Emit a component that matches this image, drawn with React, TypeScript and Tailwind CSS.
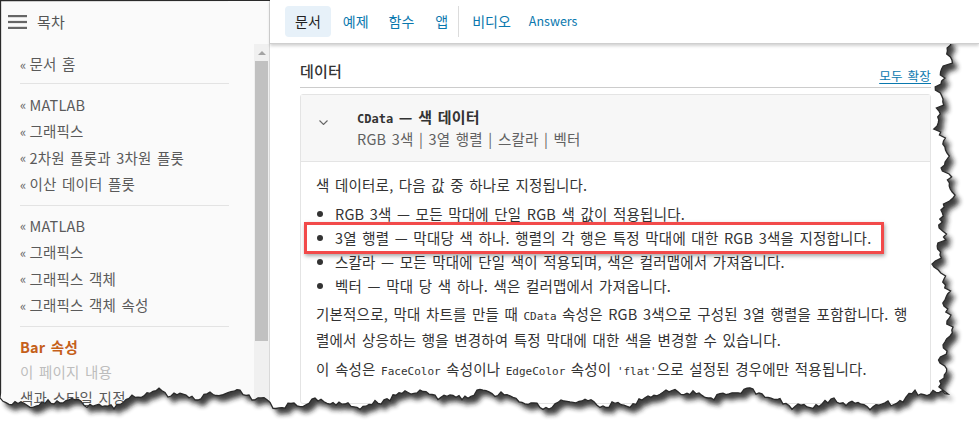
import React from "react";

function rnd(i: number) {
  const x = Math.sin(i * 12.9898 + 78.233) * 43758.5453;
  return x - Math.floor(x);
}

function tornPath() {
  const pts: string[] = [];
  pts.push("0.5,0.5");
  for (let y = 0; y <= 388; y += 3) {
    const x =
      944 +
      5 * Math.sin(y / 23) +
      3 * Math.sin(y / 7.3) +
      2.5 * Math.sin(y / 3.1 + 1) +
      (rnd(y) - 0.5) * 6;
    pts.push(`${x.toFixed(1)},${y}`);
  }
  for (let x = 948; x >= 0; x -= 3) {
    const y =
      399 +
      6 * Math.sin(x / 41) +
      4 * Math.sin(x / 13.7) +
      2 * Math.sin(x / 4.3) +
      (rnd(x + 1000) - 0.5) * 5;
    pts.push(`${x},${y.toFixed(1)}`);
  }
  pts.push("0.5,393");
  return "M" + pts.join(" L") + " Z";
}

function TornEdge() {
  const d = tornPath();
  return (
    <svg className="absolute inset-0 pointer-events-none" width={979} height={435} viewBox="0 0 979 435">
      <defs>
        <mask id="outside">
          <rect x="0" y="0" width="979" height="435" fill="white" />
          <path d={d} fill="black" />
        </mask>
        <filter id="blur" x="-10%" y="-10%" width="120%" height="120%">
          <feGaussianBlur stdDeviation="2.6" />
        </filter>
      </defs>
      <rect x="0" y="0" width="979" height="435" fill="white" mask="url(#outside)" />
      <g mask="url(#outside)">
        <path d={d} fill="#1a1a1a" opacity="0.85" transform="translate(5,6)" filter="url(#blur)" />
      </g>
      <path d={d} fill="none" stroke="#2a2a2a" strokeWidth="1.3" />
    </svg>
  );
}

const mono = "font-['DejaVu_Sans_Mono',monospace] tracking-normal";

function SideLink({ children }: { children: React.ReactNode }) {
  return (
    <div className="h-[26.5px] flex items-center text-[14.5px] text-[#5a5a5a]">
      <span className="text-[13px] mr-[3px] text-[#666]">«</span>
      {children}
    </div>
  );
}

function Bullet() {
  return <span className="w-[6px] h-[6px] rounded-full bg-[#333] ml-[1px] mr-[12px] shrink-0" />;
}

export default function App() {
  return (
    <div className="relative w-[979px] h-[435px] overflow-hidden bg-white font-['Noto_Sans_CJK_KR','Noto_Sans',sans-serif] tracking-[0.2px] [word-spacing:2px]">
      <div className="flex h-full">
        {/* Sidebar */}
        <div className="w-[270px] shrink-0 bg-[#fafafa] border-r border-[#d9d9d9] flex flex-col">
          <div className="h-[44px] flex items-center pl-[8px] gap-[10px]">
            <svg width="19" height="14" viewBox="0 0 19 14">
              <rect x="0" y="0" width="19" height="2.2" fill="#666" />
              <rect x="0" y="5.9" width="19" height="2.2" fill="#666" />
              <rect x="0" y="11.8" width="19" height="2.2" fill="#666" />
            </svg>
            <span className="text-[15px] text-[#555]">목차</span>
          </div>
          <div className="flex flex-1">
            <div className="flex-1 pl-[20px] pr-[25px] pt-[7px]">
              <SideLink>문서 홈</SideLink>
              <div className="border-t border-[#e3e3e3] mt-[5px] mb-[8px]" />
              <SideLink>MATLAB</SideLink>
              <SideLink>그래픽스</SideLink>
              <SideLink>2차원 플롯과 3차원 플롯</SideLink>
              <SideLink>이산 데이터 플롯</SideLink>
              <div className="border-t border-[#e3e3e3] mt-[7px] mb-[7px]" />
              <SideLink>MATLAB</SideLink>
              <SideLink>그래픽스</SideLink>
              <SideLink>그래픽스 객체</SideLink>
              <SideLink>그래픽스 객체 속성</SideLink>
              <div className="border-t border-[#e3e3e3] mt-[7px] mb-[8px]" />
              <div className="h-[25px] flex items-center text-[14.5px] font-bold text-[#c5601a]">Bar 속성</div>
              <div className="h-[25px] flex items-center text-[14.5px] text-[#bdbdbd]">이 페이지 내용</div>
              <div className="h-[26px] flex items-center text-[14.5px] text-[#5a5a5a]">색과 스타일 지정</div>
            </div>
            <div className="w-[15px] bg-[#f0f0f0] flex flex-col items-center">
              <div className="h-[17px] flex items-center justify-center">
                <div className="w-0 h-0 border-l-[4px] border-r-[4px] border-b-[4px] border-l-transparent border-r-transparent border-b-[#a3a3a3]" />
              </div>
              <div className="w-[13px] h-[280px] bg-[#c1c1c1]" />
            </div>
          </div>
        </div>

        {/* Main */}
        <div className="flex-1 flex flex-col">
          <div className="h-[44px] border-b border-[#cfcfcf] shadow-[0_2px_3px_rgba(0,0,0,0.18)] flex items-center pl-[15px] relative z-10 bg-white tracking-normal [word-spacing:0px]">
            <div className="h-[31px] px-[10px] flex items-center rounded-[4px] bg-[#e7f1f9] text-[14px] text-[#222]">문서</div>
            <span className="ml-[12px] text-[14px] text-[#0a78ae]">예제</span>
            <span className="ml-[20px] text-[14px] text-[#0a78ae]">함수</span>
            <span className="ml-[21px] text-[14px] text-[#0a78ae]">앱</span>
            <div className="ml-[10px] w-px h-[31px] bg-[#dcdcdc]" />
            <span className="ml-[13px] text-[14px] text-[#0a78ae]">비디오</span>
            <span className="ml-[18px] text-[12.5px] text-[#0a78ae]">Answers</span>
          </div>

          <div className="pl-[30px] pr-[48px] pt-[16px]">
            <div className="flex items-end justify-between border-b border-[#cccccc] pb-[4px]">
              <span className="text-[15px] font-medium text-[#333]">데이터</span>
              <span className="text-[12.5px] text-[#0a78ae] underline underline-offset-[2px] mb-[-3px]">모두 확장</span>
            </div>

            <div className="mt-[6px] border border-[#e4e4e4] rounded-[3px]">
              <div className="bg-[#f7f7f7] border-b border-[#e4e4e4] h-[67px] flex items-center">
                <div className="w-[44px] flex justify-center self-start pt-[25px]">
                  <svg width="9" height="5" viewBox="0 0 9 5">
                    <path d="M0.5 0.5 L4.5 4.5 L8.5 0.5" fill="none" stroke="#666" strokeWidth="1.1" />
                  </svg>
                </div>
                <div className="flex flex-col ml-[12px]">
                  <div className="text-[15px] font-bold text-[#333] leading-[20px]">
                    <span className={mono + " text-[12px]"}>CData</span> — 색 데이터
                  </div>
                  <div className="text-[14.5px] text-[#616161] leading-[20px]">RGB 3색 | 3열 행렬 | 스칼라 | 벡터</div>
                </div>
              </div>
              <div className="pl-[15px] pr-[14px] pt-[13px] pb-[20px] text-[14.5px] text-[#333]">
                <p className="leading-[20px]">색 데이터로, 다음 값 중 하나로 지정됩니다.</p>
                <ul className="mt-[7px]">
                  <li className="flex items-center h-[24px]">
                    <Bullet />
                    RGB 3색 — 모든 막대에 단일 RGB 색 값이 적용됩니다.
                  </li>
                  <li className="relative flex items-center h-[24px]">
                    <div className="absolute left-[-12px] right-[32px] top-[-4px] bottom-[-4px] border-[3px] border-[#f24a4a] shadow-[1px_2px_4px_rgba(0,0,0,0.35)]" />
                    <Bullet />
                    3열 행렬 — 막대당 색 하나. 행렬의 각 행은 특정 막대에 대한 RGB 3색을 지정합니다.
                  </li>
                  <li className="flex items-center h-[24px]">
                    <Bullet />
                    스칼라 — 모든 막대에 단일 색이 적용되며, 색은 컬러맵에서 가져옵니다.
                  </li>
                  <li className="flex items-center h-[24px]">
                    <Bullet />
                    벡터 — 막대 당 색 하나. 색은 컬러맵에서 가져옵니다.
                  </li>
                </ul>
                <p className="mt-[4px] leading-[23px]">
                  기본적으로, 막대 차트를 만들 때 <span className={mono + " text-[11px]"}>CData</span> 속성은 RGB 3색으로 구성된 3열 행렬을 포함합니다. 행렬에서 상응하는 행을 변경하여 특정 막대에 대한 색을 변경할 수 있습니다.
                </p>
                <p className="mt-[6px] leading-[23px]">
                  이 속성은 <span className={mono + " text-[11px]"}>FaceColor</span> 속성이나 <span className={mono + " text-[11px]"}>EdgeColor</span> 속성이 <span className={mono + " text-[11px]"}>'flat'</span>으로 설정된 경우에만 적용됩니다.
                </p>
              </div>
            </div>
            <div className="pl-[17px] mt-[6px] text-[14.5px] font-bold text-[#333]">예제</div>
          </div>
        </div>
      </div>
      <TornEdge />
    </div>
  );
}
